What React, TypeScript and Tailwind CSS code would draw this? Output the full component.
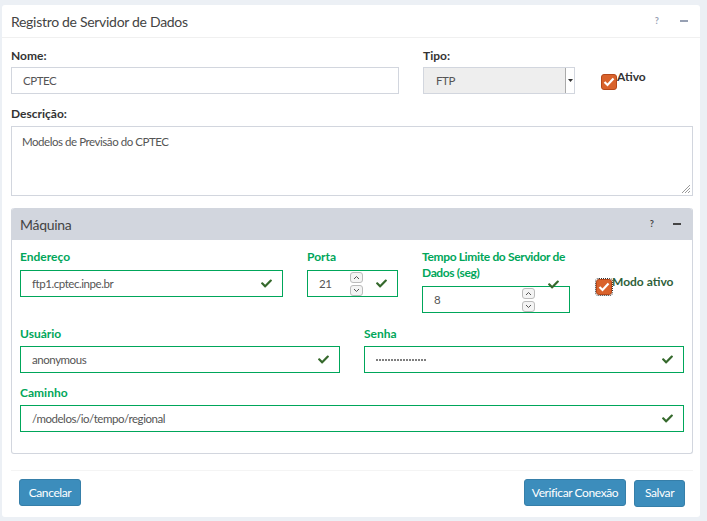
import { FaCheck } from 'react-icons/fa';

const reg = 'text-[11.5px] tracking-[-0.45px] text-[#555]';
const lbl = 'block text-[12px] leading-[16px] font-bold';

function Spinner() {
  return (
    <div className="flex flex-col gap-[2px]">
      {['M1 4 L3.5 1.5 L6 4', 'M1 1 L3.5 3.5 L6 1'].map(d => (
        <div key={d} className="w-[13px] h-[11px] rounded-[3px] border border-[#bbb] bg-[#f4f4f4] flex items-center justify-center text-[#555]">
          <svg width="7" height="5" viewBox="0 0 7 5"><path d={d} stroke="currentColor" strokeWidth="1" fill="none" /></svg>
        </div>
      ))}
    </div>
  );
}

function Check() {
  return <FaCheck className="text-[#35692c] w-[11px] h-[11px]" />;
}

function Dots() {
  return (
    <span className="flex gap-[1px]">
      {Array.from({ length: 17 }, (_, i) => <span key={i} className="w-[2px] h-[2px] rounded-full bg-[#555]" />)}
    </span>
  );
}

function OkInput({ children, w, spinner }: { children: React.ReactNode; w: string; spinner?: boolean }) {
  return (
    <div className={`${w} h-[27px] border border-[#00a65a] flex items-center pl-[11px] pr-[10px] ${reg}`}>
      <span className="flex-1">{children}</span>
      {spinner && <div className="mr-[13px]"><Spinner /></div>}
      <Check />
    </div>
  );
}

function Box({ className = '' }: { className?: string }) {
  return (
    <div className={`w-[16px] h-[16px] rounded-[3px] bg-[#d9622b] border border-[#b5471a] flex items-center justify-center shrink-0 ${className}`}>
      <svg width="12" height="10" viewBox="0 0 12 10"><path d="M1.5 5 L4.5 8 L10.5 1.5" stroke="white" strokeWidth="2.2" fill="none" /></svg>
    </div>
  );
}

function Btn({ w, children }: { w: string; children: React.ReactNode }) {
  return (
    <button className={`${w} h-[27px] bg-[#3c8dbc] border border-[#367fa9] rounded-[3px] text-white text-[12px] tracking-[-0.4px]`}>{children}</button>
  );
}

export default function App() {
  return (
    <div className="w-[707px] h-[521px] bg-[#ecf0f5] pt-[5px] pl-[2px] pr-[7px] overflow-hidden" style={{ fontFamily: 'Lato, "Liberation Sans", sans-serif' }}>
      <div className="bg-white rounded-[3px] h-[512px]">
        {/* header */}
        <div className="h-[33px] border-b border-[#f0f0f0] flex items-center pl-[9px] pr-[12px]">
          <h3 className="flex-1 text-[14px] tracking-[-0.3px] text-[#444]">Registro de Servidor de Dados</h3>
          <span className="text-[9px] text-[#97a0b3] font-bold mr-[21px]">?</span>
          <span className="w-[8px] h-[2px] bg-[#97a0b3]" />
        </div>

        <div className="pl-[9px] pr-[7px] pt-[10px]">
          <div className="flex">
            <div className="w-[388px]">
              <label className={`${lbl} text-[#333] mb-[3px]`}>Nome:</label>
              <div className={`h-[27px] border border-[#d2d6de] flex items-center pl-[11px] ${reg}`}>CPTEC</div>
            </div>
            <div className="ml-[24px] w-[152px]">
              <label className={`${lbl} text-[#333] mb-[3px]`}>Tipo:</label>
              <div className={`h-[27px] border border-[#d2d6de] bg-[#eee] flex items-center pl-[12px] ${reg}`}>
                <span className="flex-1">FTP</span>
                <div className="w-[9px] h-full border-l border-[#aaa] bg-white flex items-center justify-center">
                  <svg width="5" height="3" viewBox="0 0 5 3"><path d="M0 0 H5 L2.5 3 Z" fill="#333" /></svg>
                </div>
              </div>
            </div>
            <div className="ml-[26px] pt-[21px] flex items-start">
              <Box className="mt-[5px]" />
              <span className="text-[12px] leading-[16px] font-bold text-[#333]">Ativo</span>
            </div>
          </div>

          <label className={`${lbl} text-[#333] mt-[12px] mb-[4px]`}>Descrição:</label>
          <div className={`relative h-[70px] border border-[#d2d6de] pl-[10px] pt-[6px] ${reg}`}>
            Modelos de Previsão do CPTEC
            <svg className="absolute right-[1px] bottom-[1px]" width="12" height="12" viewBox="0 0 12 12">
              <path d="M11 3 L3 11 M11 6 L6 11 M11 9 L9 11" stroke="#999" strokeWidth="1" />
            </svg>
          </div>

          {/* Máquina */}
          <div className="mt-[12px] border border-[#d2d6de] rounded-[3px] border-t-0">
            <div className="h-[32px] bg-[#d2d6de] flex items-center pl-[8px] pr-[11px] rounded-t-[3px]">
              <h3 className="flex-1 text-[14px] tracking-[-0.3px] text-[#444]">Máquina</h3>
              <span className="text-[9px] text-[#444] font-bold mr-[19px]">?</span>
              <span className="w-[8px] h-[2px] bg-[#444]" />
            </div>
            <div className="pl-[8px] pr-[8px] pt-[9px] pb-[21px]">
              <div className="flex">
                <div>
                  <label className={`${lbl} text-[#00a65a] mb-[5px]`}>Endereço</label>
                  <OkInput w="w-[263px]">ftp1.cptec.inpe.br</OkInput>
                </div>
                <div className="ml-[24px]">
                  <label className={`${lbl} text-[#00a65a] mb-[5px]`}>Porta</label>
                  <OkInput w="w-[91px]" spinner>21</OkInput>
                </div>
                <div className="ml-[24px] relative w-[152px]">
                  <label className={`${lbl} text-[#00a65a] tracking-[-0.35px] mb-[5px]`}>Tempo Limite do Servidor de Dados (seg)</label>
                  <div className={`w-[148px] h-[27px] border border-[#00a65a] flex items-center pl-[11px] ${reg}`}>
                    <span className="flex-1">8</span>
                    <div className="mr-[34px]"><Spinner /></div>
                  </div>
                  <div className="absolute left-[126px] top-[30px]"><Check /></div>
                </div>
                <div className="ml-[22px] pt-[25px] flex items-start">
                  <Box className="outline outline-1 outline-dotted outline-[#333] mt-[5px]" />
                  <span className="text-[12px] leading-[16px] font-bold text-[#2f5f3a]">Modo ativo</span>
                </div>
              </div>

              <div className="flex mt-[13px]">
                <div>
                  <label className={`${lbl} text-[#00a65a] mb-[4px]`}>Usuário</label>
                  <OkInput w="w-[320px]">anonymous</OkInput>
                </div>
                <div className="ml-[24px]">
                  <label className={`${lbl} text-[#00a65a] mb-[4px]`}>Senha</label>
                  <OkInput w="w-[320px]"><Dots /></OkInput>
                </div>
              </div>

              <div className="mt-[12px]">
                <label className={`${lbl} text-[#00a65a] mb-[4px]`}>Caminho</label>
                <OkInput w="w-[664px]">/modelos/io/tempo/regional</OkInput>
              </div>
            </div>
          </div>

          {/* footer */}
          <div className="mt-[16px] border-t border-[#f4f4f4] pt-[8px] flex px-[8px]">
            <Btn w="w-[62px]">Cancelar</Btn>
            <div className="flex-1" />
            <Btn w="w-[102px]">Verificar Conexão</Btn>
            <div className="ml-[8px]"><Btn w="w-[51px]">Salvar</Btn></div>
          </div>
        </div>
      </div>
    </div>
  );
}
